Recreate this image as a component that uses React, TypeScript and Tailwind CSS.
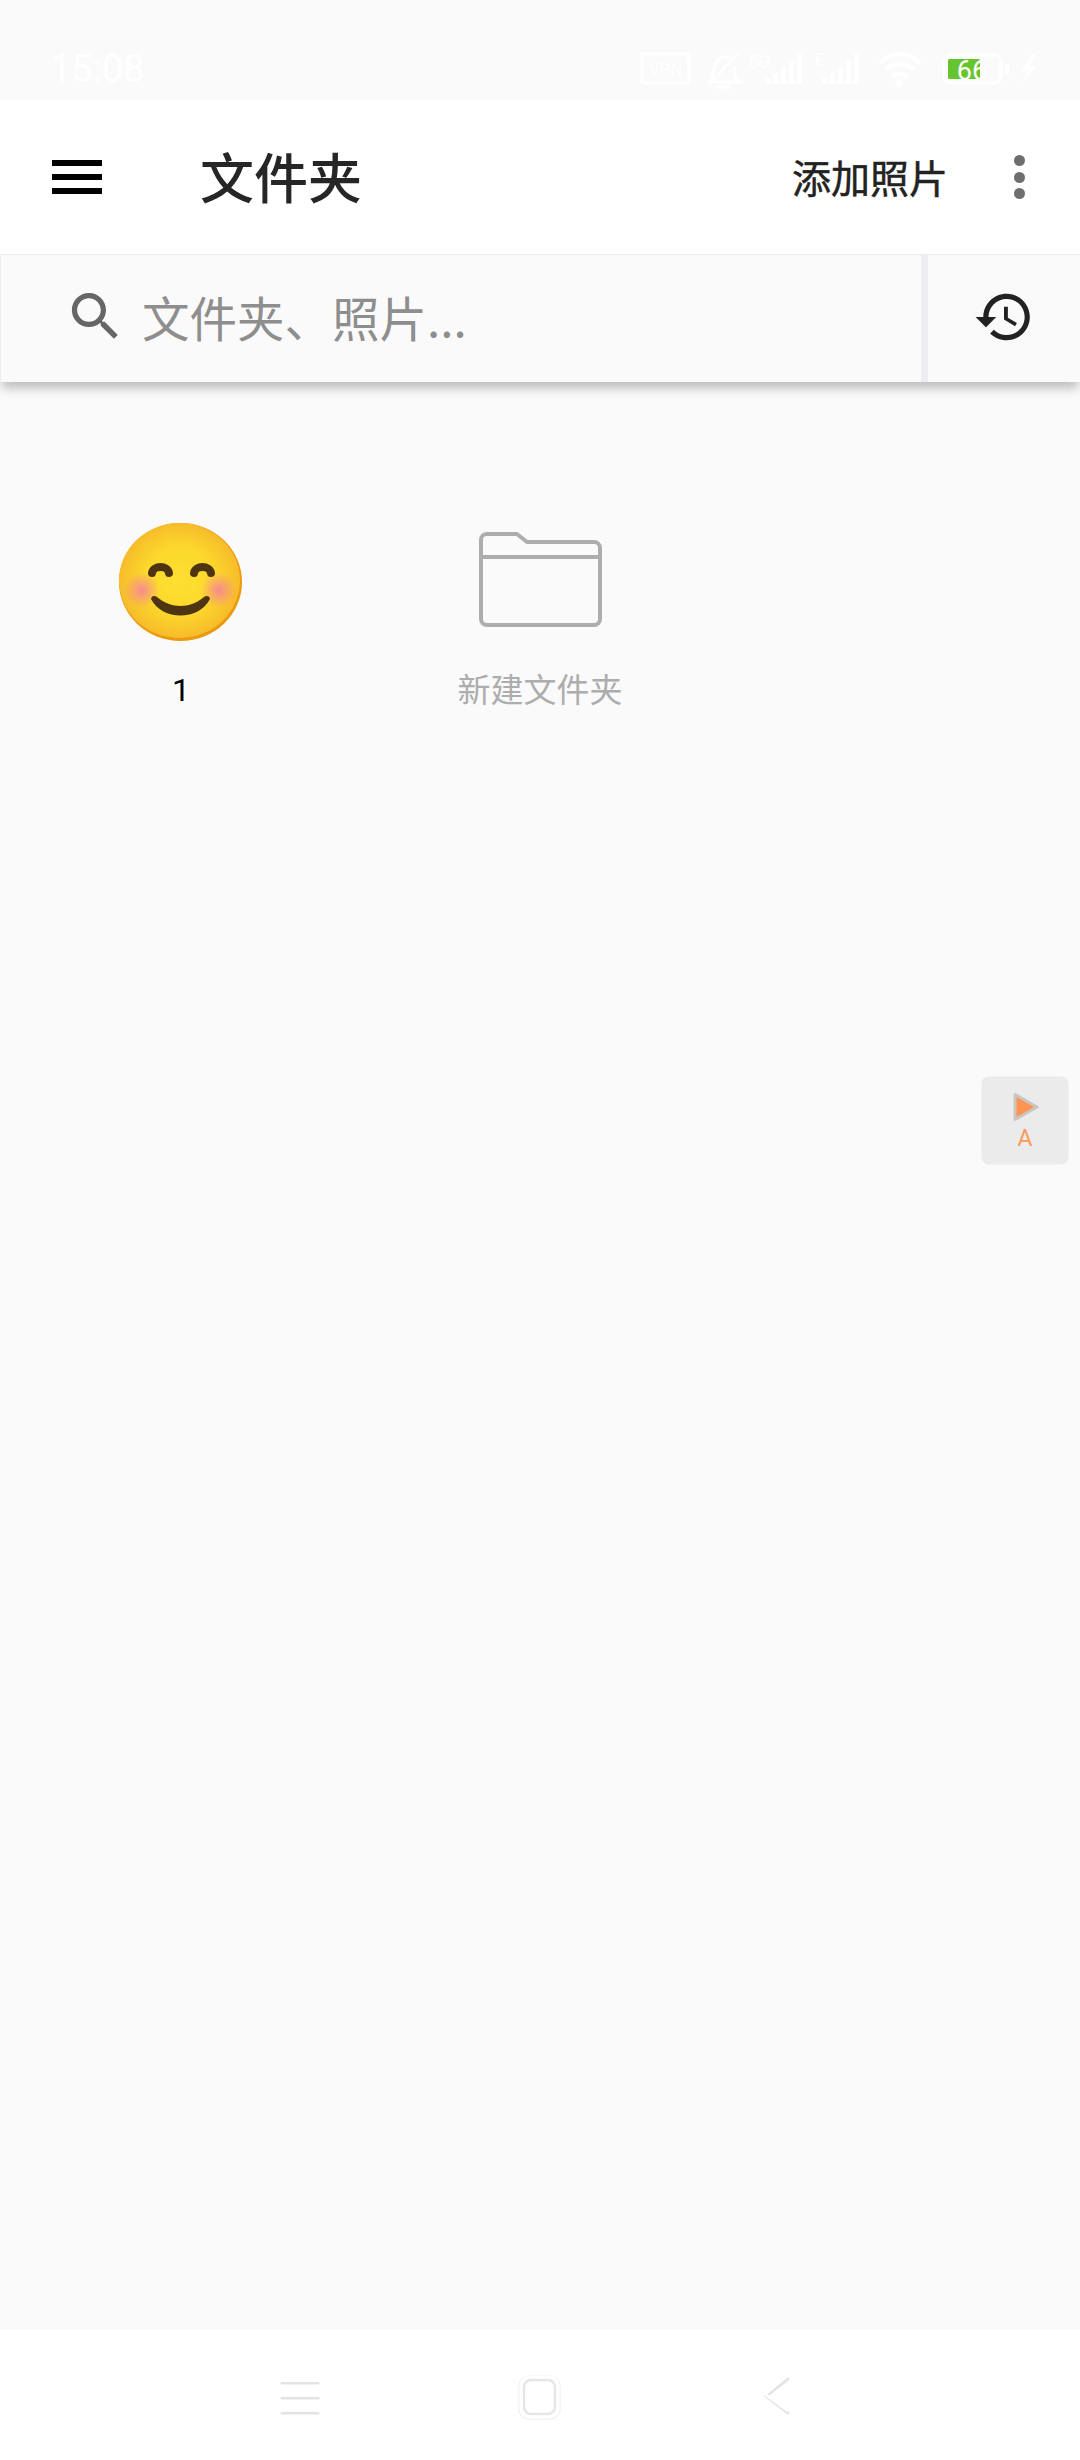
import React from "react";

const CJK = "font-['Noto_Sans_CJK_SC','Noto_Sans',sans-serif]";

function StatusBar() {
  return (
    <div className="relative flex h-[100px] shrink-0 items-start justify-between bg-[#fafafa] pl-[50px] pr-[43px] pt-[47px] text-white">
      <span className="font-['Roboto',sans-serif] text-[38px] leading-[44px]">15:08</span>
      <svg width="397" height="42" viewBox="0 0 397 42" className="mt-[2px]" fill="#ffffff">
        <rect x="2" y="5" width="47" height="29" rx="2" fill="none" stroke="#ffffff" strokeWidth="3" />
        <text x="25.5" y="26" textAnchor="middle" fontSize="17" fontFamily="Roboto, sans-serif">VPN</text>
        <path d="M72 30 C74 24 74 14 79 10 C84 6 90 8 93 12 M94 18 L96 30 L100 33 H68 M75 38 H90" fill="none" stroke="#ffffff" strokeWidth="3" />
        <path d="M69 36 L99 3" stroke="#ffffff" strokeWidth="3" />
        <text x="108" y="19" fontSize="18" fontFamily="Roboto, sans-serif">5G</text>
        <path d="M125 29h5v6h-5zM133 24h5v11h-5zM141 18h5v17h-5zM149 12h5v23h-5zM157 5h5v30h-5z" />
        <text x="175" y="17" fontSize="18" fontFamily="Roboto, sans-serif">E</text>
        <path d="M182 29h5v6h-5zM190 24h5v11h-5zM198 18h5v17h-5zM206 12h5v23h-5zM214 5h5v30h-5z" />
        <path d="M240 14 C250 2 270 2 280 14 M246 21 C253 13 266 13 273 21 M252 28 C256 24 263 24 267 28" fill="none" stroke="#ffffff" strokeWidth="4.5" />
        <circle cx="259" cy="34" r="3.5" />
        <rect x="304" y="6" width="57" height="28" rx="7" fill="none" stroke="#ffffff" strokeWidth="3" />
        <rect x="308" y="10" width="32" height="20" rx="1.5" fill="#66c52e" />
        <text x="332" y="31" textAnchor="middle" fontSize="27" fontFamily="Roboto, sans-serif">66</text>
        <rect x="365" y="15" width="4" height="10" rx="1.5" />
        <path d="M392 5 L381 22 H388 L381 36 L396 18 H389 L396 5 Z" />
      </svg>
    </div>
  );
}

function Toolbar() {
  return (
    <div className={`flex h-[154px] shrink-0 items-center bg-white ${CJK}`}>
      <div className="ml-[52px] flex h-[34px] w-[50px] flex-col justify-between">
        <div className="h-[6px] bg-black" />
        <div className="h-[6px] bg-black" />
        <div className="h-[6px] bg-black" />
      </div>
      <h1 className="ml-[98px] mt-[-2px] text-[54px] font-medium leading-[64px] text-[#262626]">文件夹</h1>
      <span className="ml-auto mt-[-2px] text-[39px] leading-[48px] text-[#222222] [-webkit-text-stroke:0.5px_#222222]">添加照片</span>
      <div className="ml-[66px] mr-[55px] flex h-[44px] w-[11px] flex-col justify-between">
        <div className="h-[11px] rounded-full bg-[#6e6e6e]" />
        <div className="h-[11px] rounded-full bg-[#6e6e6e]" />
        <div className="h-[11px] rounded-full bg-[#6e6e6e]" />
      </div>
    </div>
  );
}

function SearchBar() {
  return (
    <div className={`z-10 flex h-[128px] shrink-0 border-l border-t border-[#eeeeee] bg-[#fafafa] shadow-[0_8px_10px_-2px_rgba(0,0,0,0.25)] ${CJK}`}>
      <div className="flex w-[920px] items-center pl-[63px]">
        <svg width="63" height="63" viewBox="0 0 24 24" fill="#666666" className="mt-[-4px]">
          <path d="M15.5 14h-.79l-.28-.27C15.41 12.59 16 11.11 16 9.5 16 5.91 13.09 3 9.5 3S3 5.91 3 9.5 5.91 16 9.5 16c1.61 0 3.09-.59 4.23-1.57l.27.28v.79l5 4.99L20.49 19l-4.99-5zm-6 0C7.01 14 5 11.99 5 9.5S7.01 5 9.5 5 14 7.01 14 9.5 11.99 14 9.5 14z" />
        </svg>
        <span className="ml-[15px] mt-[-4px] text-[47.5px] leading-[60px] text-[#8e8e8e]">文件夹、照片...</span>
      </div>
      <div className="h-full w-[7px] bg-[#eeeef2]" />
      <div className="flex flex-1 items-center pl-[45px]">
        <svg width="62" height="62" viewBox="0 0 24 24" fill="#222222" className="mt-[-4px]">
          <path d="M13 3c-4.97 0-9 4.03-9 9H1l3.89 3.89.07.14L9 12H6c0-3.87 3.13-7 7-7s7 3.13 7 7-3.13 7-7 7c-1.93 0-3.68-.79-4.94-2.06l-1.42 1.42C8.27 19.99 10.51 21 13 21c4.97 0 9-4.03 9-9s-4.03-9-9-9zm-1 5v5l4.28 2.54.72-1.21-3.5-2.08V8H12z" />
        </svg>
      </div>
    </div>
  );
}

function Smiley() {
  return (
    <svg width="124" height="118" viewBox="0 0 124 118" className="ml-[1px]">
      <defs>
        <radialGradient id="face" cx="50%" cy="50%" r="52%">
          <stop offset="0%" stopColor="#fde030" />
          <stop offset="55%" stopColor="#fcd82c" />
          <stop offset="100%" stopColor="#f6b92a" />
        </radialGradient>
        <radialGradient id="blush" cx="50%" cy="50%" r="50%">
          <stop offset="0%" stopColor="#f78a90" />
          <stop offset="100%" stopColor="#f78a90" stopOpacity="0" />
        </radialGradient>
      </defs>
      <ellipse cx="61.5" cy="59" rx="61.5" ry="59" fill="#ea9a0c" />
      <ellipse cx="60.5" cy="57.5" rx="60.5" ry="57.5" fill="url(#face)" />
      <circle cx="22.7" cy="67.3" r="18" fill="url(#blush)" />
      <circle cx="100" cy="67.3" r="18" fill="url(#blush)" />
      <path d="M33 50 C34 42 49 42 50 50" fill="none" stroke="#4e3410" strokeWidth="8" strokeLinecap="round" />
      <path d="M75 50 C76 42 91 42 92 50" fill="none" stroke="#4e3410" strokeWidth="8" strokeLinecap="round" />
      <path d="M32 76 C33 72 36 73 38 74 C52 86 71 86 85 74 C87 73 90 72 91 76 C80 98 43 98 32 76 Z" fill="#4e3410" />
    </svg>
  );
}

function FolderIcon() {
  return (
    <svg width="123" height="95" viewBox="0 0 123 95" fill="none" stroke="#adadad" strokeWidth="4" className="mt-[9px]">
      <path d="M2 8 a6 6 0 0 1 6-6 H38 L48 10 H115 a6 6 0 0 1 6 6 V87 a6 6 0 0 1-6 6 H8 a6 6 0 0 1-6-6 Z" strokeLinejoin="round" />
      <path d="M2 25 H121" />
    </svg>
  );
}

function Item({ icon, label, color }: { icon: React.ReactNode; label: string; color: string }) {
  return (
    <div className="flex flex-col items-center">
      <div className="flex h-[124px] items-start">{icon}</div>
      <span className={`leading-[44px] ${color}`}>{label}</span>
    </div>
  );
}

function FloatButton() {
  return (
    <div className="absolute left-[982px] top-[1077px] flex h-[87px] w-[86px] flex-col items-center rounded-[7px] bg-[#ebebeb] pt-[14px] font-['Roboto',sans-serif] shadow-[0_0_2px_rgba(0,0,0,0.12)]">
      <svg width="28" height="32" viewBox="0 0 28 32" className="ml-[2px]">
        <path d="M3 3.5 L25 16 L3 28.5 Z" fill="#ff9350" stroke="#c9c5c1" strokeWidth="3" strokeLinejoin="round" />
      </svg>
      <span className="mt-[3px] text-[23px] leading-[26px] text-[#fb9a5b]">A</span>
    </div>
  );
}

function NavBar() {
  return (
    <div className="flex h-[130px] shrink-0 items-start bg-white pl-[280px] pt-[45px]">
      <svg width="40" height="44" viewBox="0 0 40 44" fill="none" strokeLinecap="round">
        <path d="M2 8 H38 M2 23 H38 M2 38 H38" stroke="#e3e3e3" strokeWidth="3" />
        <path d="M2 5 H38 M2 20 H38 M2 35 H38" stroke="#ffffff" strokeWidth="4" />
      </svg>
      <svg width="44" height="46" viewBox="0 0 44 46" fill="none" className="ml-[198px]">
        <rect x="1" y="1" width="41" height="43" rx="10" stroke="#f1f1f1" strokeWidth="1.5" />
        <rect x="6" y="5" width="31" height="34" rx="7" stroke="#e6e6e6" strokeWidth="2.5" />
        <rect x="3" y="2" width="37" height="40" rx="8" stroke="#ffffff" strokeWidth="3" />
      </svg>
      <svg width="28" height="46" viewBox="0 0 28 46" fill="none" strokeLinecap="round" className="ml-[201px]">
        <path d="M25 4 L3 21 L25 38" stroke="#e3e3e3" strokeWidth="3" />
        <path d="M24 1 L2 19 L24 35" stroke="#ffffff" strokeWidth="3" />
      </svg>
    </div>
  );
}

export default function App() {
  return (
    <div className="relative flex h-[2460px] w-[1080px] flex-col overflow-hidden bg-[#fafafa]">
      <StatusBar />
      <Toolbar />
      <SearchBar />
      <main className={`flex-1 pt-[141px] ${CJK}`}>
        <div className="grid grid-cols-3">
          <Item icon={<Smiley />} label="1" color="mt-[21px] ml-[2px] text-[32px] text-black font-['Roboto',sans-serif]" />
          <Item icon={<FolderIcon />} label="新建文件夹" color="mt-[19px] text-[33px] text-[#adadad]" />
        </div>
      </main>
      <FloatButton />
      <NavBar />
    </div>
  );
}
